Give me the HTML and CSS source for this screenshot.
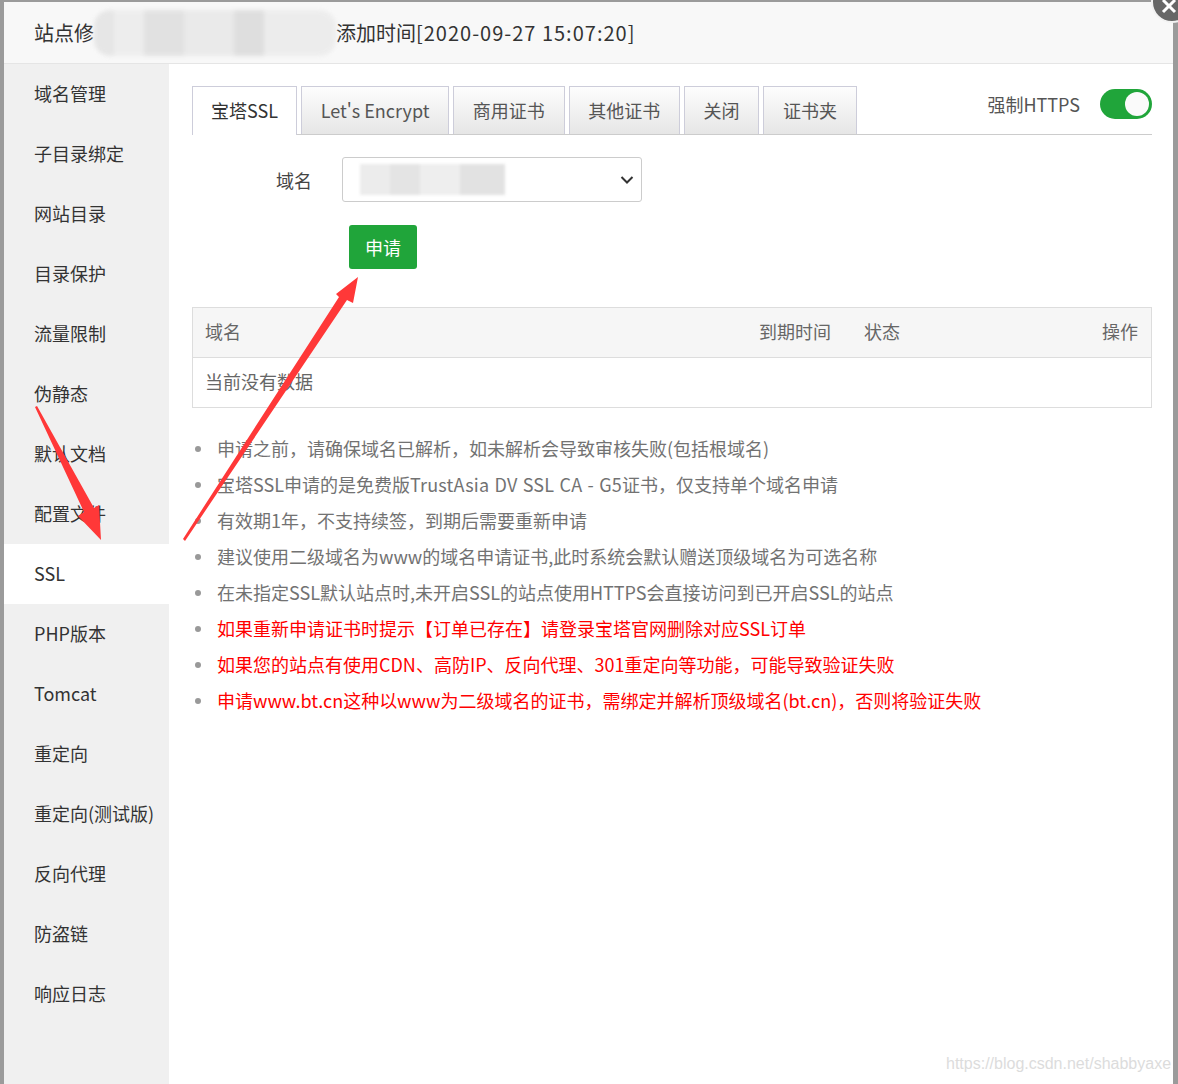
FILE: index.html
```html
<!DOCTYPE html>
<html lang="zh-CN">
<head>
<meta charset="utf-8">
<title>站点修改</title>
<link rel="stylesheet" href="styles.css">
</head>
<body>
<div class="dialog">
  <div class="header">
    <span class="title">站点修</span><span class="blur-title"></span><span class="title title-tail">添加时间<span class="date">[2020-09-27 15:07:20]</span></span>
  </div>
  <div class="body">
    <ul class="side">
      <li>域名管理</li>
      <li>子目录绑定</li>
      <li>网站目录</li>
      <li>目录保护</li>
      <li>流量限制</li>
      <li>伪静态</li>
      <li>默认文档</li>
      <li>配置文件</li>
      <li class="active">SSL</li>
      <li>PHP版本</li>
      <li>Tomcat</li>
      <li>重定向</li>
      <li>重定向(测试版)</li>
      <li>反向代理</li>
      <li>防盗链</li>
      <li>响应日志</li>
    </ul>
    <div class="main">
      <div class="tabbar">
        <div class="tabs">
          <span class="tab on">宝塔SSL</span>
          <span class="tab">Let's Encrypt</span>
          <span class="tab">商用证书</span>
          <span class="tab">其他证书</span>
          <span class="tab">关闭</span>
          <span class="tab">证书夹</span>
        </div>
        <div class="force">
          <span class="force-label">强制HTTPS</span>
          <span class="switch"><span class="knob"></span></span>
        </div>
      </div>
      <div class="form-row">
        <span class="label">域名</span>
        <div class="select">
          <span class="blur-select"></span>
          <svg class="chev" width="14" height="10" viewBox="0 0 14 10"><path d="M1.5 2 L7 7.5 L12.5 2" fill="none" stroke="#333" stroke-width="2"/></svg>
        </div>
      </div>
      <div class="btn-row"><button class="btn">申请</button></div>
      <div class="table">
        <div class="thead">
          <span class="c">域名</span>
          <span class="c">到期时间</span>
          <span class="c">状态</span>
          <span class="c r">操作</span>
        </div>
        <div class="trow">当前没有数据</div>
      </div>
      <ul class="tips">
        <li>申请之前，请确保域名已解析，如未解析会导致审核失败(包括根域名)</li>
        <li>宝塔SSL申请的是免费版<span class="wide">TrustAsia DV SSL CA - G5</span>证书，仅支持单个域名申请</li>
        <li>有效期1年，不支持续签，到期后需要重新申请</li>
        <li>建议使用二级域名为www的域名申请证书,此时系统会默认赠送顶级域名为可选名称</li>
        <li>在未指定SSL默认站点时,未开启SSL的站点使用HTTPS会直接访问到已开启SSL的站点</li>
        <li class="red">如果重新申请证书时提示【订单已存在】请登录宝塔官网删除对应SSL订单</li>
        <li class="red">如果您的站点有使用CDN、高防IP、反向代理、301重定向等功能，可能导致验证失败</li>
        <li class="red">申请www.bt.cn这种以www为二级域名的证书，需绑定并解析顶级域名(bt.cn)，否则将验证失败</li>
      </ul>
    </div>
  </div>
</div>
<span class="close"><svg width="16" height="16" viewBox="0 0 16 16"><path d="M2 2 L14 14 M14 2 L2 14" stroke="#fff" stroke-width="3"/></svg></span>
<svg class="arrows" width="1178" height="1084" viewBox="0 0 1178 1084">
  <polygon points="35,407 37,406 94,508 99,505 101,540 78,516 84,512" fill="#ff3838"/>
  <polygon points="185,541 183,539 339,297 336,294 358,277 353,303 347,300" fill="#ff3838"/>
</svg>
<span class="watermark">https://blog.csdn.net/shabbyaxe</span>
</body>
</html>
```
FILE: styles.css
```css
* { box-sizing: border-box; }
html, body { margin: 0; padding: 0; }
body {
  width: 1178px;
  height: 1084px;
  overflow: hidden;
  background: #9b9b9b;
  font-family: "Noto Sans CJK SC", "Noto Sans", sans-serif;
  position: relative;
}
.dialog {
  margin: 2px 5px 0 4px;
  height: 1082px;
  background: #fff;
  display: flex;
  flex-direction: column;
}
.header {
  height: 62px;
  background: #f8f8f8;
  border-bottom: 1px solid #e5e5e5;
  display: flex;
  align-items: center;
  padding-left: 30px;
  flex-shrink: 0;
}
.title {
  font-size: 20px;
  color: #333;
  line-height: 28px;
}
.date { letter-spacing: 1px; }
.blur-title {
  display: inline-block;
  width: 242px;
  height: 46px;
  border-radius: 16px;
  background:
    linear-gradient(90deg, #e3e3e3 0 20px, #ececec 20px 50px, #dedede 50px 90px, #e8e8e8 90px 140px, #dadada 140px 170px, #ebebeb 170px 242px);
  filter: blur(2px);
  opacity: 0.85;
}
.body {
  flex: 1;
  display: flex;
  min-height: 0;
}
.side {
  list-style: none;
  margin: 0;
  padding: 0;
  width: 165px;
  background: #f0f0f0;
  flex-shrink: 0;
}
.side li {
  height: 60px;
  line-height: 58px;
  padding-left: 30px;
  font-size: 18px;
  color: #333;
  white-space: nowrap;
}
.side li.active { background: #fff; }
.main {
  flex: 1;
  padding: 23px 21px 0 23px;
}
.tabbar {
  display: flex;
  justify-content: space-between;
  align-items: flex-end;
  border-bottom: 1px solid #ccc;
  height: 48px;
}
.tabs { display: flex; gap: 4px; }
.tab {
  height: 48px;
  line-height: 46px;
  padding: 0 18.7px;
  font-size: 18px;
  color: #555;
  border: 1px solid #cdcdda;
  border-bottom: none;
  background: linear-gradient(#fdfdfd, #e6e6e6);
  margin-bottom: -1px;
  white-space: nowrap;
}
.tab.on {
  background: #fff;
  color: #333;
  height: 49px;
  padding: 0 18px;
}
.force {
  display: flex;
  align-items: center;
  gap: 20px;
  align-self: center;
  margin-top: -13px;
}
.force-label { font-size: 18px; color: #555; }
.switch {
  width: 52px;
  height: 30px;
  border-radius: 15px;
  background: #20a53a;
  display: flex;
  align-items: center;
  justify-content: flex-end;
  padding-right: 3px;
}
.knob {
  width: 24px;
  height: 24px;
  border-radius: 50%;
  background: #fafafa;
}
.form-row {
  display: flex;
  align-items: center;
  margin-top: 22px;
}
.label {
  width: 120px;
  text-align: right;
  font-size: 18px;
  color: #444;
  margin-right: 30px;
}
.select {
  width: 300px;
  height: 45px;
  border: 1px solid #ccc;
  border-radius: 3px;
  display: flex;
  align-items: center;
  justify-content: space-between;
  padding: 0 7px 0 17px;
}
.blur-select {
  width: 145px;
  height: 31px;
  background: linear-gradient(90deg, #ececec 0 30px, #e4e4e4 30px 60px, #eeeeee 60px 100px, #e2e2e2 100px 145px);
  filter: blur(1.5px);
}
.btn-row {
  margin-top: 23px;
  padding-left: 157px;
}
.btn {
  display: block;
  width: 68px;
  height: 44px;
  background: #20a53a;
  border: none;
  border-radius: 3px;
  color: #fff;
  font-size: 18px;
  font-family: "Noto Sans CJK SC", sans-serif;
  padding: 0;
}
.table {
  margin-top: 38px;
  border: 1px solid #ddd;
}
.thead {
  display: grid;
  grid-template-columns: 554px 105px 1fr auto;
  height: 50px;
  align-items: center;
  background: #f6f6f6;
  border-bottom: 1px solid #ddd;
  padding-bottom: 3px;
}
.c {
  padding: 0 12px;
  font-size: 18px;
  color: #666;
}
.c.r { text-align: right; padding-right: 13px; }
.trow {
  height: 49px;
  line-height: 47px;
  padding-left: 12px;
  font-size: 18px;
  color: #666;
}
.tips {
  margin: 23px 0 0 0;
  padding: 0 0 0 25px;
  list-style: none;
}
.tips li {
  position: relative;
  height: 36px;
  line-height: 34px;
  font-size: 18px;
  color: #727272;
  white-space: nowrap;
}
.tips li::before {
  content: "";
  position: absolute;
  left: -22px;
  top: 15px;
  width: 6px;
  height: 6px;
  border-radius: 50%;
  background: #999;
}
.tips li.red { color: #ff0000; }
.wide { letter-spacing: 0.2px; word-spacing: 1px; }
.close {
  position: absolute;
  left: 1151px;
  top: -19px;
  width: 42px;
  height: 42px;
  border-radius: 50%;
  background: #676767;
  border: 2px solid #f2f2f2;
  display: flex;
  align-items: flex-end;
  justify-content: flex-start;
  padding: 0 0 7px 8px;
}
.arrows {
  position: absolute;
  left: 0;
  top: 0;
  pointer-events: none;
}
.watermark {
  position: absolute;
  left: 946px;
  top: 1055px;
  font-family: "Liberation Sans", Arial, sans-serif;
  font-size: 16px;
  color: #dcdcdc;
}
```
